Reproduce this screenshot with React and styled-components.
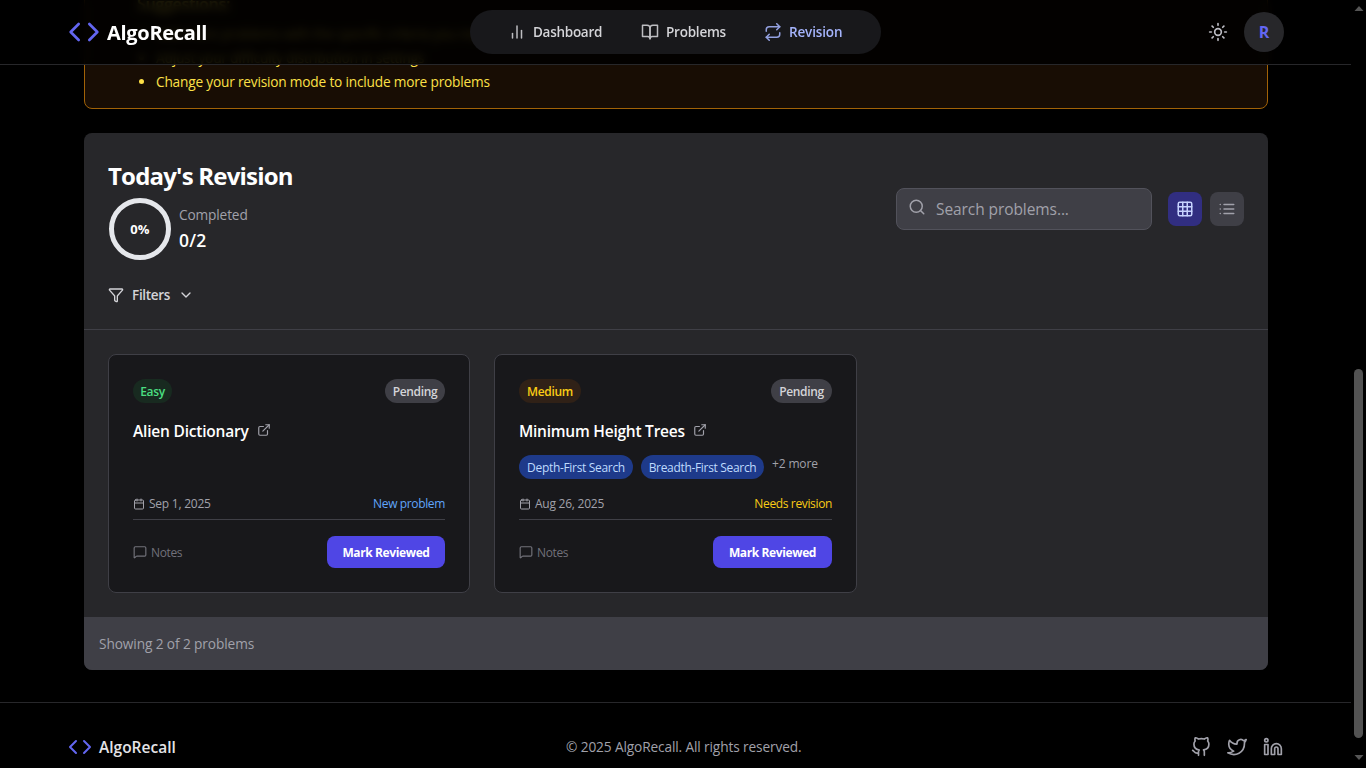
import React from "react";
import styled, { createGlobalStyle } from "styled-components";
import { FiBarChart2, FiBookOpen, FiRepeat, FiSearch, FiList, FiExternalLink, FiGithub, FiTwitter, FiLinkedin, FiChevronDown, FiCode } from "react-icons/fi";
import { Sun, Funnel, Grid3x3, Calendar, MessageSquare } from "lucide-react";

const Global = createGlobalStyle`
  *, *::before, *::after { box-sizing: border-box; }
  html, body { margin: 0; background: #000; overflow: hidden; }
  body { font-family: "Open Sans", "Noto Sans", sans-serif; font-size: 14px; color: #fff; }
  button, input { font-family: inherit; margin: 0; border: 0; }
  svg { flex: none; display: block; }
`;

const Viewport = styled.div`
  display: grid;
  grid-template-columns: 1351px 15px;
  width: 1366px;
  height: 768px;
  overflow: hidden;
  background: #000;
`;

const Page = styled.div`
  display: flex;
  flex-direction: column;
  height: 768px;
  overflow: hidden;
  position: relative;
  > * { flex-shrink: 0; }
`;

const T = styled.span`
  display: inline-block;
  white-space: nowrap;
  font-size: ${(p) => p.$size || 14}px;
  font-weight: ${(p) => p.$weight || 400};
  letter-spacing: ${(p) => p.$ls || 0}px;
  line-height: ${(p) => p.$lh || 20}px;
  padding-top: ${(p) => p.$pt || 0}px;
  color: ${(p) => p.$color || "inherit"};
`;

const Header = styled.header`
  position: absolute;
  inset: 0 0 auto 0;
  z-index: 2;
  height: 65px;
  padding: 0 67px 0 68px;
  display: grid;
  grid-template-columns: 402px 411px 1fr;
  align-items: center;
  background: rgba(0, 0, 0, 0.86);
  backdrop-filter: blur(4px);
  border-bottom: 1px solid #27272a;
`;

const Brand = styled.div`
  display: flex;
  align-items: center;
  gap: ${(p) => p.$gap}px;
  color: #6366f1;
`;

const Nav = styled.nav`
  height: 44px;
  border-radius: 22px;
  background: #18181b;
  display: flex;
  align-items: center;
  padding-left: 38px;
`;

const NavItem = styled.a`
  display: flex;
  align-items: center;
  gap: 7px;
  width: ${(p) => p.$width}px;
  color: ${(p) => (p.$active ? "#a5b4fc" : "#d4d4d8")};
  svg { opacity: 0.88; }
`;

const Account = styled.div`
  display: flex;
  align-items: center;
  justify-content: flex-end;
  gap: 16px;
  color: #bcbcc3;
`;

const Avatar = styled.div`
  width: 40px;
  height: 40px;
  border-radius: 50%;
  background: #27272a;
  display: grid;
  place-items: center;
`;

const Main = styled.main`
  padding: 0 83px 0 84px;
  display: flex;
  flex-direction: column;
  gap: 24px;
`;

const Notice = styled.section`
  height: 139px;
  margin-top: -30px;
  border: 1px solid #a16207;
  border-radius: 8px;
  background: #180d04;
  color: #fde047;
  padding: 21px 0 0 52px;
`;

const NoticeTitle = styled.div`
  height: 30px;
`;

const Tips = styled.ul`
  margin: 0;
  padding: 0 0 0 19px;
  li { height: 24px; line-height: 24px; }
  li::marker { font-size: 14px; }
`;

const Panel = styled.section`
  border-radius: 8px;
  overflow: hidden;
  background: #27272a;
  height: 537px;
  display: flex;
  flex-direction: column;
`;

const PanelHead = styled.div`
  height: 197px;
  padding: 24px 24px 0;
  border-bottom: 1px solid #3f3f46;
`;

const HeadRow = styled.div`
  display: flex;
  justify-content: space-between;
  align-items: center;
  height: 104px;
`;

const Summary = styled.div`
  display: flex;
  flex-direction: column;
  gap: 4px;
`;

const Progress = styled.div`
  display: flex;
  align-items: center;
  gap: 7px;
`;

const Ring = styled.div`
  width: 62px;
  height: 62px;
  margin: 1px 1px;
  border: 5px solid #e5e7eb;
  border-radius: 50%;
  display: grid;
  place-items: center;
`;

const Stack = styled.div`
  display: flex;
  flex-direction: column;
`;

const Controls = styled.div`
  display: flex;
  align-items: center;
  gap: 8px;
`;

const SearchBox = styled.div`
  width: 256px;
  height: 42px;
  margin-right: 8px;
  padding-left: 11px;
  display: flex;
  align-items: center;
  gap: 10px;
  background: #3f3f46;
  border: 1px solid #52525b;
  border-radius: 8px;
  color: #a1a1aa;
  svg { margin-bottom: 4px; }
`;

const ViewButton = styled.button`
  width: 34px;
  height: 34px;
  border-radius: 8px;
  padding: 8px;
  background: ${(p) => (p.$active ? "#312e81" : "#3f3f46")};
  color: ${(p) => (p.$active ? "#c7d2fe" : "#a1a1aa")};
`;

const Filters = styled.div`
  display: flex;
  align-items: center;
  gap: 8px;
  margin-top: 24px;
  color: #d4d4d8;
`;

const Cards = styled.div`
  display: grid;
  grid-template-columns: 362px 363px;
  gap: 24px;
  padding: 24px;
  height: 287px;
`;

const Card = styled.article`
  height: 239px;
  padding: 24px;
  background: #18181b;
  border: 1px solid #3f3f46;
  border-radius: 8px;
  display: flex;
  flex-direction: column;
`;

const Row = styled.div`
  display: flex;
  justify-content: space-between;
  align-items: center;
`;

const Badge = styled.span`
  height: 24px;
  border-radius: 12px;
  width: ${(p) => p.$width}px;
  display: flex;
  justify-content: center;
  align-items: center;
  background: ${(p) => p.$bg};
`;

const TitleRow = styled.div`
  display: flex;
  align-items: center;
  gap: 8px;
  height: 24px;
  margin-top: 16px;
  color: #a1a1aa;
  svg { margin-bottom: 2px; }
`;

const Tags = styled.div`
  height: 24px;
  margin-top: 12px;
  display: flex;
  gap: 8px;
`;

const Meta = styled(Row)`
  margin-top: 14px;
  padding-bottom: 5px;
  height: 27px;
  border-bottom: 1px solid #3f3f46;
  margin-bottom: 16px;
`;

const IconText = styled.span`
  display: flex;
  align-items: center;
  gap: ${(p) => p.$gap}px;
  color: ${(p) => p.$color};
`;

const ReviewButton = styled.button`
  width: ${(p) => p.$width}px;
  height: 32px;
  padding: 0;
  border-radius: 8px;
  background: #4f46e5;
  color: #fff;
`;

const PanelFoot = styled.div`
  height: 53px;
  padding: 0 15px;
  display: flex;
  align-items: center;
  background: #3f3f46;
`;

const Footer = styled.footer`
  margin-top: 32px;
  height: 89px;
  padding: 0 68px;
  border-top: 1px solid #27272a;
  display: grid;
  grid-template-columns: 498px 1fr auto;
  align-items: center;
`;

const Social = styled.div`
  display: flex;
  gap: 16px;
  color: #a1a1aa;
`;

const ScrollTrack = styled.div`
  display: flex;
  flex-direction: column;
  align-items: center;
  color: #555;
  padding: 6px 0 7px;
`;

const Thumb = styled.div`
  width: 9px;
  height: 369px;
  margin: auto 0 17px;
  border-radius: 5px;
  background: #525252;
`;

const Arrow = ({ down }) => (
  <svg width="10" height="6" viewBox="0 0 10 6" fill="currentColor">
    <path d={down ? "M0.5 0h9L5 5z" : "M0.5 5h9L5 0z"} />
  </svg>
);

const problems = [
  { title: "Alien Dictionary", ls: -0.2, level: "Easy", levelColor: "#4ade80", levelBg: "#182a20", levelW: 39, pendW: 60, tags: [], date: "Sep 1, 2025", status: "New problem", statusColor: "#60a5fa", btn: 118 },
  { title: "Minimum Height Trees", ls: -0.24, level: "Medium", levelColor: "#facc15", levelBg: "#302117", levelW: 62, pendW: 61, tags: [["Depth-First Search", 114], ["Breadth-First Search", 123]], more: "+2 more", date: "Aug 26, 2025", status: "Needs revision", statusColor: "#facc15", btn: 119 },
];

function ProblemCard({ p }) {
  return (
    <Card>
      <Row>
        <Badge $width={p.levelW} $bg={p.levelBg}><T $size={12} $weight={600} $ls={-0.33} $pt={2} $color={p.levelColor}>{p.level}</T></Badge>
        <Badge $width={p.pendW} $bg="#3f3f46"><T $size={12} $weight={600} $ls={-0.33} $pt={2} $color="#d4d4d8">Pending</T></Badge>
      </Row>
      <TitleRow>
        <T $size={15.5} $weight={600} $ls={p.ls} $color="#fff">{p.title}</T>
        <FiExternalLink size={14} />
      </TitleRow>
      <Tags>
        {p.tags.map(([t, w]) => (
          <Badge key={t} $width={w} $bg="#1e3a8a"><T $size={12} $ls={-0.32} $pt={2} $color="#bfdbfe">{t}</T></Badge>
        ))}
        {p.more && <T $size={12} $ls={-0.15} $lh={18} $color="#a1a1aa">{p.more}</T>}
      </Tags>
      <Meta>
        <IconText $gap={4} $color="#a1a1aa"><Calendar size={12} /><T $size={12} $ls={-0.24}>{p.date}</T></IconText>
        <T $size={12} $ls={-0.36} $color={p.statusColor}>{p.status}</T>
      </Meta>
      <Row>
        <IconText $gap={4} $color="#71717a"><MessageSquare size={14} /><T $size={12} $ls={-0.35} $pt={2}>Notes</T></IconText>
        <ReviewButton $width={p.btn}><T $size={12} $weight={700} $ls={-0.38} $pt={2}>Mark Reviewed</T></ReviewButton>
      </Row>
    </Card>
  );
}

export default function App() {
  return (
    <>
      <Global />
      <Viewport>
        <Page>
          <Header>
            <Brand $gap={7}><FiCode size={32} /><T $size={20} $weight={700} $ls={-0.3} $lh={28} $pt={2} $color="#fff">AlgoRecall</T></Brand>
            <Nav>
              <NavItem $width={133}><FiBarChart2 size={18} /><T $size={13.5} $weight={600} $ls={-0.28}>Dashboard</T></NavItem>
              <NavItem $width={123}><FiBookOpen size={18} /><T $size={13.5} $weight={600} $ls={-0.23}>Problems</T></NavItem>
              <NavItem $width={100} $active><FiRepeat size={18} /><T $size={13.5} $weight={600} $ls={-0.15}>Revision</T></NavItem>
            </Nav>
            <Account>
              <Sun size={20} />
              <Avatar><T $size={16} $weight={700} $color="#6366f1">R</T></Avatar>
            </Account>
          </Header>
          <Main>
            <Notice>
              <NoticeTitle><T $size={16} $weight={600} $ls={-0.3} $lh={24}>Suggestions:</T></NoticeTitle>
              <Tips>
                <li><T $size={13.7} $ls={-0.2}>Add more problems with the specific criteria you need</T></li>
                <li><T $size={13.7} $ls={-0.2}>Adjust your difficulty distribution in settings</T></li>
                <li><T $size={13.7} $ls={-0.2}>Change your revision mode to include more problems</T></li>
              </Tips>
            </Notice>
            <Panel>
              <PanelHead>
                <HeadRow>
                  <Summary>
                    <T $size={24} $weight={700} $ls={-0.8} $lh={35}>Today's Revision</T>
                    <Progress>
                      <Ring><T $size={13} $weight={700} $ls={0.1}>0%</T></Ring>
                      <Stack>
                        <T $size={13.7} $ls={-0.15} $color="#a1a1aa" $lh={22}>Completed</T>
                        <T $size={17.5} $weight={600} $ls={0.2} $lh={28}>0/2</T>
                      </Stack>
                    </Progress>
                  </Summary>
                  <Controls>
                    <SearchBox><FiSearch size={18} /><T $size={15.5} $ls={-0.08}>Search problems...</T></SearchBox>
                    <ViewButton $active><Grid3x3 size={18} /></ViewButton>
                    <ViewButton><FiList size={18} /></ViewButton>
                  </Controls>
                </HeadRow>
                <Filters><Funnel size={16} /><T $size={13.5} $weight={600} $ls={-0.3}>Filters</T><FiChevronDown size={16} /></Filters>
              </PanelHead>
              <Cards>{problems.map((p) => <ProblemCard key={p.title} p={p} />)}</Cards>
              <PanelFoot><T $color="#a1a1aa" $size={13.7} $ls={-0.11} $pt={1}>Showing 2 of 2 problems</T></PanelFoot>
            </Panel>
          </Main>
          <Footer>
            <Brand $gap={7}><FiCode size={24} /><T $size={15.5} $weight={600} $color="#e4e4e7">AlgoRecall</T></Brand>
            <T $color="#a1a1aa" $size={13.7} $ls={-0.13}>© 2025 AlgoRecall. All rights reserved.</T>
            <Social><FiGithub size={20} /><FiTwitter size={20} /><FiLinkedin size={20} /></Social>
          </Footer>
        </Page>
        <ScrollTrack><Arrow /><Thumb /><Arrow down /></ScrollTrack>
      </Viewport>
    </>
  );
}
